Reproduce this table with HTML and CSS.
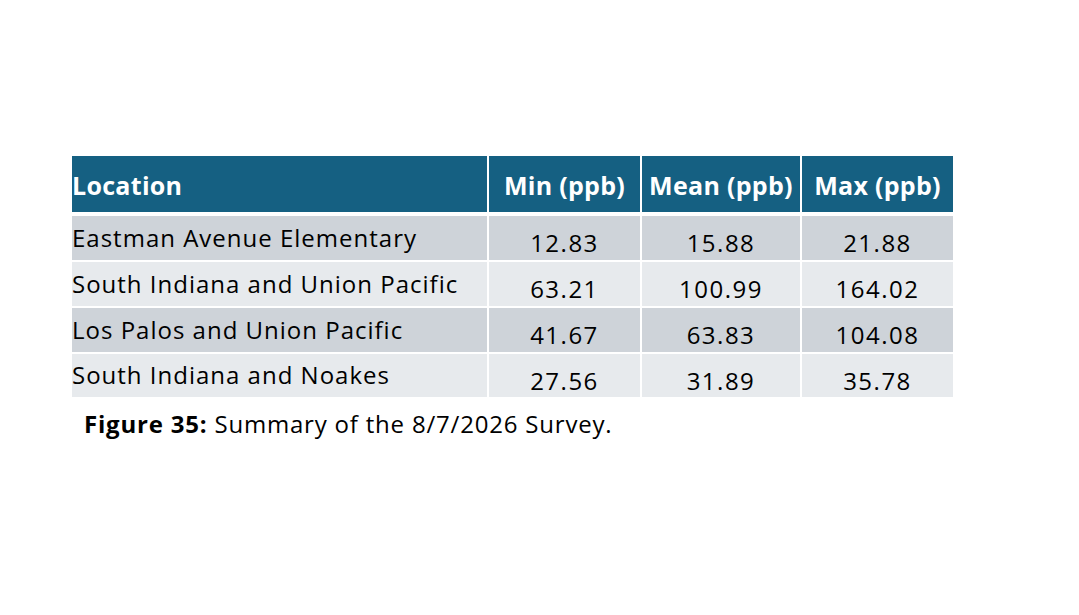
FILE: index.html
```html
<!DOCTYPE html>
<html lang="en">
<head>
<meta charset="utf-8">
<title>Summary of the 8/7/2026 Survey</title>
<link rel="stylesheet" href="styles.css">
</head>
<body>
<main class="slide">
  <figure class="figure">
    <div class="summary" role="table">
      <div class="cell head loc" role="columnheader">Location</div>
      <div class="cell head num" role="columnheader">Min (ppb)</div>
      <div class="cell head num" role="columnheader">Mean (ppb)</div>
      <div class="cell head num" role="columnheader">Max (ppb)</div>

      <div class="cell dark loc">Eastman Avenue Elementary</div>
      <div class="cell dark num">12.83</div>
      <div class="cell dark num">15.88</div>
      <div class="cell dark num">21.88</div>

      <div class="cell light loc">South Indiana and Union Pacific</div>
      <div class="cell light num">63.21</div>
      <div class="cell light num">100.99</div>
      <div class="cell light num">164.02</div>

      <div class="cell dark loc">Los Palos and Union Pacific</div>
      <div class="cell dark num">41.67</div>
      <div class="cell dark num">63.83</div>
      <div class="cell dark num">104.08</div>

      <div class="cell light loc">South Indiana and Noakes</div>
      <div class="cell light num">27.56</div>
      <div class="cell light num">31.89</div>
      <div class="cell light num">35.78</div>
    </div>
    <figcaption class="caption"><strong>Figure 35:</strong> Summary of the 8/7/2026 Survey.</figcaption>
  </figure>
</main>
</body>
</html>
```
FILE: styles.css
```css
html, body {
  margin: 0;
  padding: 0;
  background: #ffffff;
}

body {
  width: 1079px;
  height: 615px;
  overflow: hidden;
  font-family: "Open Sans", "Noto Sans", sans-serif;
  color: #000000;
}

.slide {
  padding: 156px 0 0 72px;
}

.figure {
  margin: 0;
}

.summary {
  display: grid;
  grid-template-columns: 415px 151px 158px 151px;
  grid-template-rows: 58px 44px 44px 44px 43px;
  column-gap: 2px;
  row-gap: 2px;
  width: 881px;
}

.cell {
  display: flex;
  align-items: center;
  white-space: nowrap;
}

.head {
  background: #156082;
  color: #ffffff;
  font-weight: 700;
  font-size: 25px;
  letter-spacing: 0.3px;
  margin-bottom: 2px;
  padding-top: 2px;
}

.head.num {
  justify-content: center;
}

.dark {
  background: #ced3d9;
}

.light {
  background: #e7eaed;
}

.loc {
  justify-content: flex-start;
  padding-left: 0;
}

.cell.loc:not(.head) {
  font-size: 24px;
  letter-spacing: 1px;
  padding-bottom: 2px;
}

.cell.num:not(.head) {
  justify-content: center;
  align-items: flex-end;
  font-size: 24px;
  line-height: 30px;
  letter-spacing: 1.5px;
  padding-bottom: 2px;
}

.cell.num.light:nth-last-child(-n+3) {
  padding-bottom: 1px;
}

.caption {
  margin: 10px 0 0 12px;
  font-size: 24px;
  letter-spacing: 0.8px;
}

.caption strong {
  font-weight: 700;
}
```
